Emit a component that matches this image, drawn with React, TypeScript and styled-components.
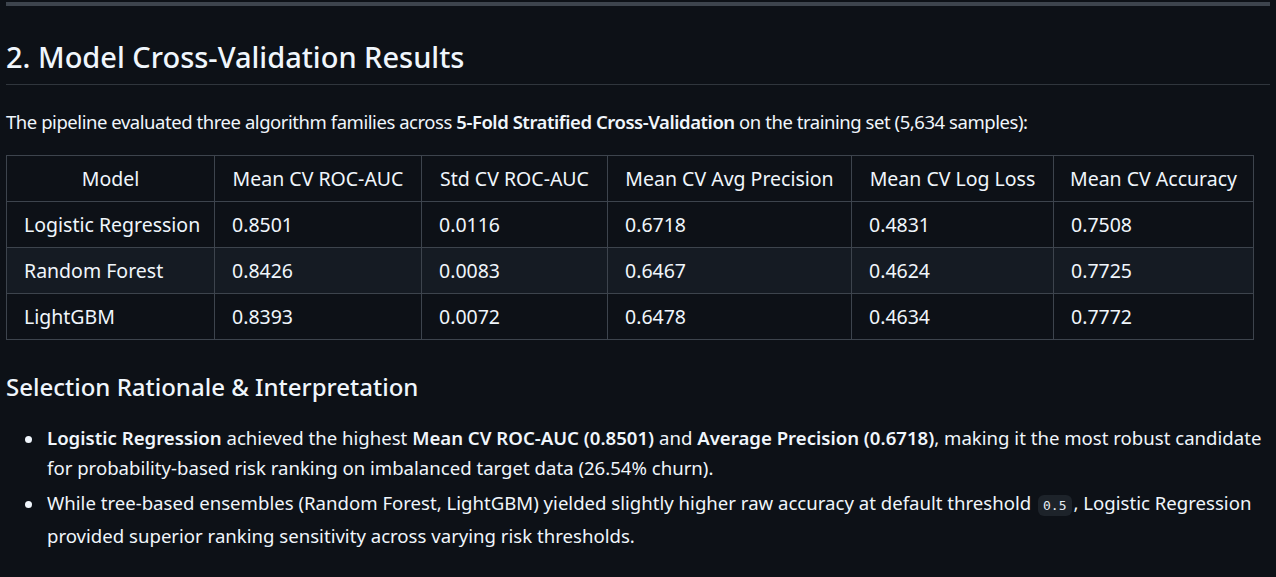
import React from "react";
import styled, { createGlobalStyle } from "styled-components";

const Global = createGlobalStyle`
  html, body {
    margin: 0;
    padding: 0;
    background: #0d1117;
  }
  body {
    color: #f0f6fc;
    font-family: "Noto Sans", "Open Sans", sans-serif;
    font-size: 18px;
  }
`;

const Page = styled.main`
  padding: 2px 6px 0 6px;
`;

const Rule = styled.hr`
  height: 4px;
  margin: 0;
  border: 0;
  background: #3d444d;
`;

const H2 = styled.h2`
  margin: 33px 0 0;
  padding-bottom: 9px;
  font-size: 29px;
  font-weight: 500;
  line-height: 36px;
  border-bottom: 1px solid #30363d;
`;

const Para = styled.p`
  margin: 24px 0 0;
  font-size: 18.5px;
  letter-spacing: -0.45px;
  line-height: 26px;
`;

const Strong = styled.strong`
  font-weight: 600;
`;

const Table = styled.table`
  margin-top: 20px;
  border-collapse: collapse;
  table-layout: fixed;
  width: 1247px;
  font-size: 19.5px;
`;

const Row = styled.tr<{ $alt?: boolean }>`
  background: ${(p) => (p.$alt ? "#151b23" : "transparent")};
`;

const Th = styled.th`
  height: 45px;
  padding: 0 10px;
  border: 1px solid #3d444d;
  font-weight: 400;
  text-align: center;
  line-height: 24px;
  white-space: nowrap;
`;

const Td = styled.td`
  height: 45px;
  padding: 0 17px;
  border: 1px solid #3d444d;
  line-height: 24px;
  white-space: nowrap;
`;

const H3 = styled.h3`
  margin: 32px 0 0;
  font-size: 24px;
  font-weight: 500;
  line-height: 30px;
`;

const List = styled.ul`
  margin: 21px 0 0;
  padding-left: 41px;
  list-style: none;
  font-size: 18.6px;
`;

const Item = styled.li`
  position: relative;
  line-height: 30px;
  & + & {
    margin-top: 5px;
  }
  &::before {
    content: "";
    position: absolute;
    left: -22px;
    top: 13px;
    width: 7px;
    height: 7px;
    border-radius: 50%;
    background: #f0f6fc;
  }
`;

const Code = styled.code`
  font-family: "DejaVu Sans Mono", "Liberation Mono", monospace;
  font-size: 13px;
  padding: 3px 5px;
  margin: 0 2px;
  border-radius: 6px;
  background: #1d232a;
  color: #e6edf3;
`;

const widths = [208, 207, 186, 244, 202, 200];
const headers = [
  "Model",
  "Mean CV ROC-AUC",
  "Std CV ROC-AUC",
  "Mean CV Avg Precision",
  "Mean CV Log Loss",
  "Mean CV Accuracy",
];
const rows = [
  ["Logistic Regression", "0.8501", "0.0116", "0.6718", "0.4831", "0.7508"],
  ["Random Forest", "0.8426", "0.0083", "0.6467", "0.4624", "0.7725"],
  ["LightGBM", "0.8393", "0.0072", "0.6478", "0.4634", "0.7772"],
];

export default function App() {
  return (
    <>
      <Global />
      <Page>
        <Rule />
        <H2>2. Model Cross-Validation Results</H2>
        <Para>
          The pipeline evaluated three algorithm families across{" "}
          <Strong>5-Fold Stratified Cross-Validation</Strong> on the training set (5,634 samples):
        </Para>
        <Table>
          <colgroup>
            {widths.map((w, i) => (
              <col key={i} style={{ width: w }} />
            ))}
          </colgroup>
          <thead>
            <Row>
              {headers.map((h) => (
                <Th key={h}>{h}</Th>
              ))}
            </Row>
          </thead>
          <tbody>
            {rows.map((r, i) => (
              <Row key={r[0]} $alt={i === 1}>
                {r.map((c, j) => (
                  <Td key={j}>{c}</Td>
                ))}
              </Row>
            ))}
          </tbody>
        </Table>
        <H3>Selection Rationale &amp; Interpretation</H3>
        <List>
          <Item>
            <Strong>Logistic Regression</Strong> achieved the highest{" "}
            <Strong>Mean CV ROC-AUC (0.8501)</Strong> and <Strong>Average Precision (0.6718)</Strong>,
            making it the most robust candidate
            <br />
            for probability-based risk ranking on imbalanced target data (26.54% churn).
          </Item>
          <Item>
            While tree-based ensembles (Random Forest, LightGBM) yielded slightly higher raw accuracy at
            default threshold <Code>0.5</Code>, Logistic Regression
            <br />
            provided superior ranking sensitivity across varying risk thresholds.
          </Item>
        </List>
      </Page>
    </>
  );
}
